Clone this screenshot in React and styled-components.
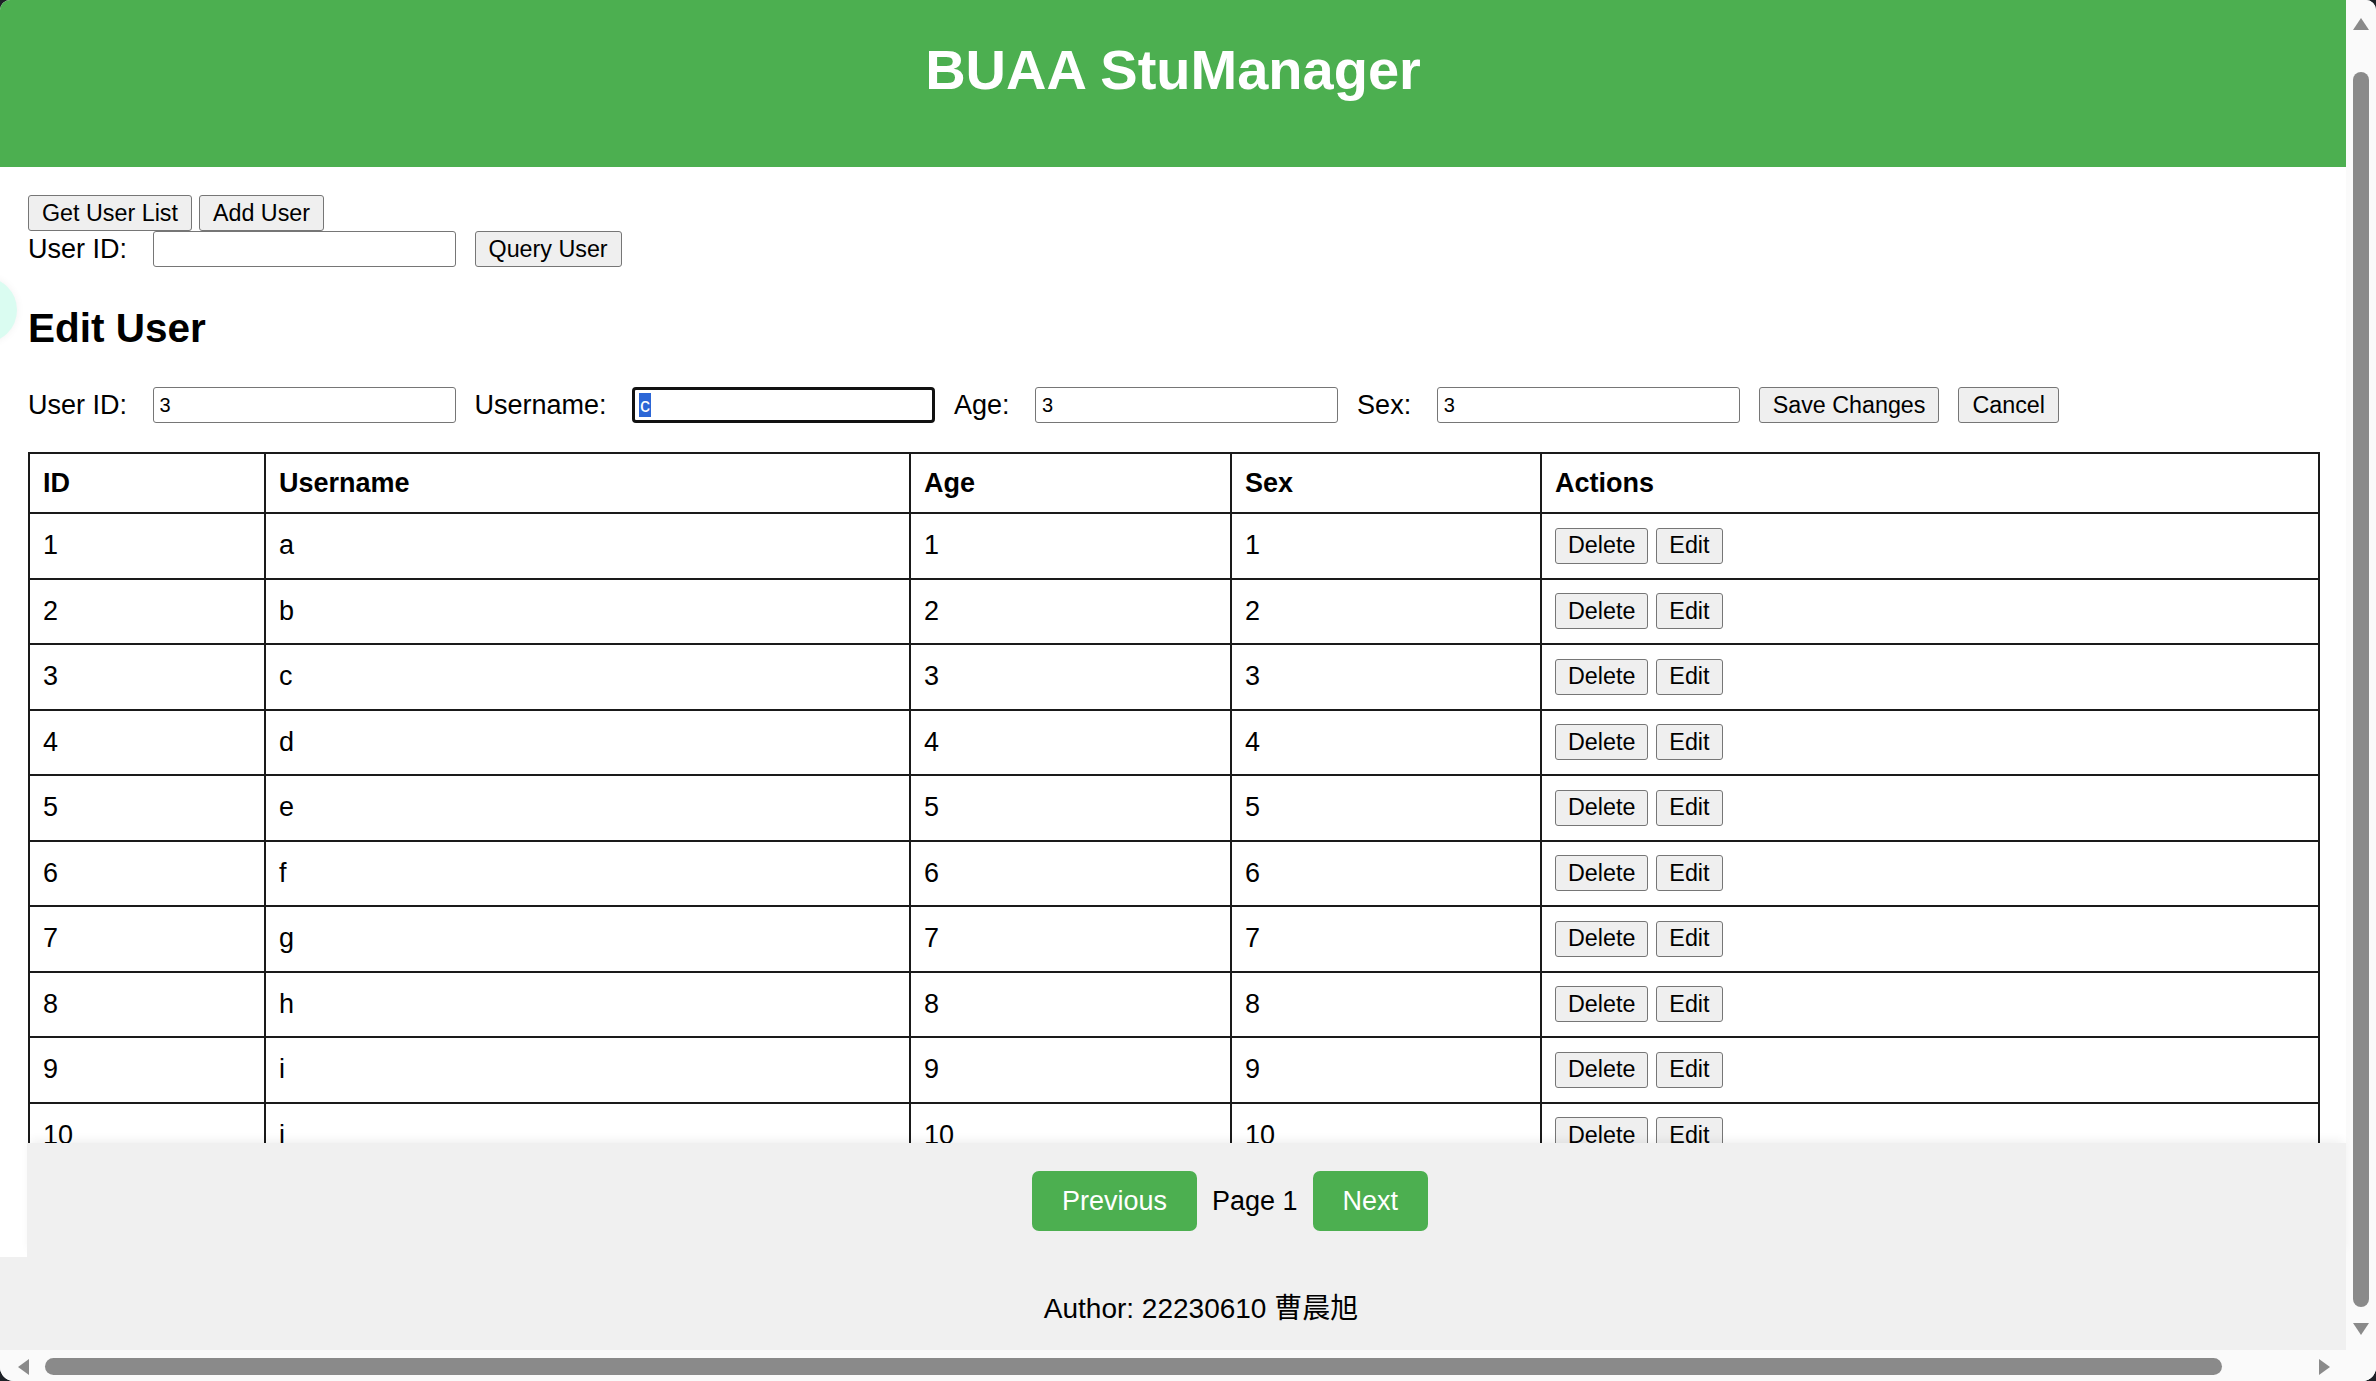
import React from "react";
import styled, { createGlobalStyle } from "styled-components";

const users = "abcdefghij".split("").map((name, i) => ({
  id: i + 1,
  username: name,
  age: i + 1,
  sex: i + 1,
}));

const columns = [
  { key: "id", label: "ID", width: 236 },
  { key: "username", label: "Username", width: 645 },
  { key: "age", label: "Age", width: 321 },
  { key: "sex", label: "Sex", width: 310 },
  { key: "actions", label: "Actions", width: 778 },
];

const App = () => {
  return (
    <>
      <GlobalStyle />
      <Window>
        <Screen>
          <Viewport>
            <Page>
              <Header>
                <Title>BUAA StuManager</Title>
              </Header>
              <Main>
                <Toolbar>
                  <Button>Get User List</Button>
                  <Button>Add User</Button>
                </Toolbar>
                <FieldRow>
                  <Label>User ID:</Label>
                  <TextInput defaultValue="" />
                  <Button>Query User</Button>
                </FieldRow>

                <Heading>Edit User</Heading>
                <FieldRow>
                  <Label>User ID:</Label>
                  <TextInput defaultValue="3" />
                  <Label>Username:</Label>
                  <FocusedInput>
                    <Selected>c</Selected>
                  </FocusedInput>
                  <Label>Age:</Label>
                  <TextInput defaultValue="3" />
                  <Label>Sex:</Label>
                  <TextInput defaultValue="3" />
                  <Button>Save Changes</Button>
                  <Button>Cancel</Button>
                </FieldRow>

                <Table>
                  <colgroup>
                    {columns.map((c) => (
                      <col key={c.key} style={{ width: c.width }} />
                    ))}
                  </colgroup>
                  <thead>
                    <HeadRow>
                      {columns.map((c) => (
                        <Th key={c.key}>{c.label}</Th>
                      ))}
                    </HeadRow>
                  </thead>
                  <tbody>
                    {users.map((u) => (
                      <BodyRow key={u.id}>
                        <Td>{u.id}</Td>
                        <Td>{u.username}</Td>
                        <Td>{u.age}</Td>
                        <Td>{u.sex}</Td>
                        <Td>
                          <RowButton>Delete</RowButton>
                          <RowButton>Edit</RowButton>
                        </Td>
                      </BodyRow>
                    ))}
                  </tbody>
                </Table>
              </Main>
            </Page>

            <Pagination>
              <PageButton>Previous</PageButton>
              <PageLabel>Page 1</PageLabel>
              <PageButton>Next</PageButton>
            </Pagination>
            <Footer>Author: 22230610 曹晨旭</Footer>
          </Viewport>

          <VScroll>
            <ArrowUp />
            <VThumb />
            <ArrowDown />
          </VScroll>
        </Screen>

        <HScrollRow>
          <HScroll>
            <ArrowLeft />
            <HThumb />
            <ArrowRight />
          </HScroll>
          <Corner />
        </HScrollRow>

        <FloatBubble />
      </Window>
    </>
  );
};

const GlobalStyle = createGlobalStyle`
  html, body {
    margin: 0;
    padding: 0;
    background: #1d2127;
  }
  body {
    font-family: "Liberation Sans", Arial, "Noto Sans CJK SC", sans-serif;
    color: #000;
  }
`;

const Window = styled.div`
  position: relative;
  width: 2376px;
  height: 1381px;
  display: flex;
  flex-direction: column;
  background: #fff;
  border-radius: 10px 10px 14px 14px;
  overflow: hidden;
`;

const Screen = styled.div`
  flex: 1;
  min-height: 0;
  display: flex;
`;

const Viewport = styled.div`
  flex: 1;
  min-width: 0;
  display: flex;
  flex-direction: column;
`;

const Page = styled.div`
  flex: 1;
  min-height: 0;
  overflow: hidden;
`;

const Header = styled.header`
  height: 167px;
  box-sizing: border-box;
  padding-top: 38px;
  background: #4caf50;
  text-align: center;
`;

const Title = styled.h1`
  margin: 0;
  color: #fff;
  font-size: 56px;
  line-height: 64px;
  font-weight: 700;
`;

const Main = styled.main`
  padding: 28px 28px 0;
`;

const Toolbar = styled.div`
  display: flex;
  gap: 7px;
`;

const FieldRow = styled.div`
  display: flex;
  align-items: center;
  gap: 19px;
  height: 36px;
`;

const Label = styled.label`
  font-size: 27px;
  margin-right: 6.5px;
  white-space: nowrap;
`;

const TextInput = styled.input`
  width: 303px;
  height: 36px;
  box-sizing: border-box;
  padding: 0 6px;
  border: 1px solid #767676;
  border-radius: 3px;
  background: #fff;
  font-family: "Liberation Sans", Arial, sans-serif;
  font-size: 20px;
  color: #000;
  outline: none;
`;

const FocusedInput = styled.div`
  width: 303px;
  height: 36px;
  box-sizing: border-box;
  padding: 0 4px;
  display: flex;
  align-items: center;
  border: 3px solid #111;
  border-radius: 4px;
  background: #fff;
  font-size: 20px;
`;

const Selected = styled.span`
  background: #2c66d6;
  color: #fff;
  line-height: 24px;
  padding: 0 1px;
`;

const Button = styled.button`
  height: 36px;
  padding: 0 13px;
  border: 1px solid #767676;
  border-radius: 3px;
  background: #efefef;
  font-family: "Liberation Sans", Arial, sans-serif;
  font-size: 23.3px;
  color: #000;
  white-space: nowrap;
`;

const RowButton = styled(Button)`
  margin-right: 8px;
  padding: 0 12px;
  vertical-align: middle;
`;

const Heading = styled.h2`
  margin: 38px 0 35px;
  font-size: 40.5px;
  line-height: 47px;
  font-weight: 700;
`;

const Table = styled.table`
  width: 100%;
  margin-top: 29px;
  border-collapse: collapse;
  table-layout: fixed;
  font-size: 27px;
`;

const HeadRow = styled.tr`
  height: 60px;
`;

const BodyRow = styled.tr`
  height: 65.5px;
`;

const Th = styled.th`
  border: 2px solid #1a1a1a;
  padding: 0 13px;
  text-align: left;
  vertical-align: middle;
  font-weight: 700;
`;

const Td = styled.td`
  border: 2px solid #1a1a1a;
  padding: 0 13px;
  text-align: left;
  vertical-align: middle;
`;

const Pagination = styled.div`
  position: relative;
  z-index: 1;
  height: 114px;
  box-sizing: border-box;
  margin-left: 27px;
  padding: 28px 0 0 87px;
  display: flex;
  justify-content: center;
  align-items: flex-start;
  gap: 15px;
  background: #f0f0f0;
  box-shadow: 0 -5px 10px -3px rgba(0, 0, 0, 0.07);
`;

const PageButton = styled.button`
  height: 60px;
  padding: 0 30px;
  border: none;
  border-radius: 7px;
  background: #4caf50;
  color: #fff;
  font-family: "Liberation Sans", Arial, sans-serif;
  font-size: 27px;
`;

const PageLabel = styled.span`
  font-size: 27px;
  line-height: 60px;
`;

const Footer = styled.footer`
  position: relative;
  z-index: 1;
  height: 93px;
  box-sizing: border-box;
  padding: 36px 0 0 56px;
  background: #f0f0f0;
  text-align: center;
  font-size: 28px;
  line-height: 31px;
`;

const VScroll = styled.div`
  width: 30px;
  display: flex;
  flex-direction: column;
  align-items: center;
  padding-top: 18px;
  box-sizing: border-box;
  background: #fafafa;
`;

const ArrowUp = styled.div`
  width: 0;
  height: 0;
  border-left: 8px solid transparent;
  border-right: 8px solid transparent;
  border-bottom: 12px solid #8a8a8a;
`;

const ArrowDown = styled.div`
  width: 0;
  height: 0;
  margin-top: 16px;
  border-left: 8px solid transparent;
  border-right: 8px solid transparent;
  border-top: 12px solid #8a8a8a;
`;

const VThumb = styled.div`
  width: 16px;
  height: 1235px;
  margin-top: 42px;
  border-radius: 8px;
  background: #8a8a8a;
`;

const HScrollRow = styled.div`
  height: 31px;
  display: flex;
  background: #fafafa;
`;

const HScroll = styled.div`
  flex: 1;
  display: flex;
  align-items: flex-start;
  padding: 8px 0 0 18px;
`;

const ArrowLeft = styled.div`
  width: 0;
  height: 0;
  margin-top: 1px;
  border-top: 8px solid transparent;
  border-bottom: 8px solid transparent;
  border-right: 11px solid #8a8a8a;
`;

const ArrowRight = styled.div`
  width: 0;
  height: 0;
  margin: 1px 16px 0 auto;
  border-top: 8px solid transparent;
  border-bottom: 8px solid transparent;
  border-left: 11px solid #8a8a8a;
`;

const HThumb = styled.div`
  width: 2177px;
  height: 17px;
  margin-left: 16px;
  border-radius: 9px;
  background: #8a8a8a;
`;

const Corner = styled.div`
  width: 30px;
  background: #fafafa;
`;

const FloatBubble = styled.div`
  position: absolute;
  left: -49px;
  top: 277px;
  width: 66px;
  height: 66px;
  border-radius: 50%;
  background: #dafcf1;
  box-shadow: 0 0 8px rgba(0, 0, 0, 0.06);
`;

export default App;
